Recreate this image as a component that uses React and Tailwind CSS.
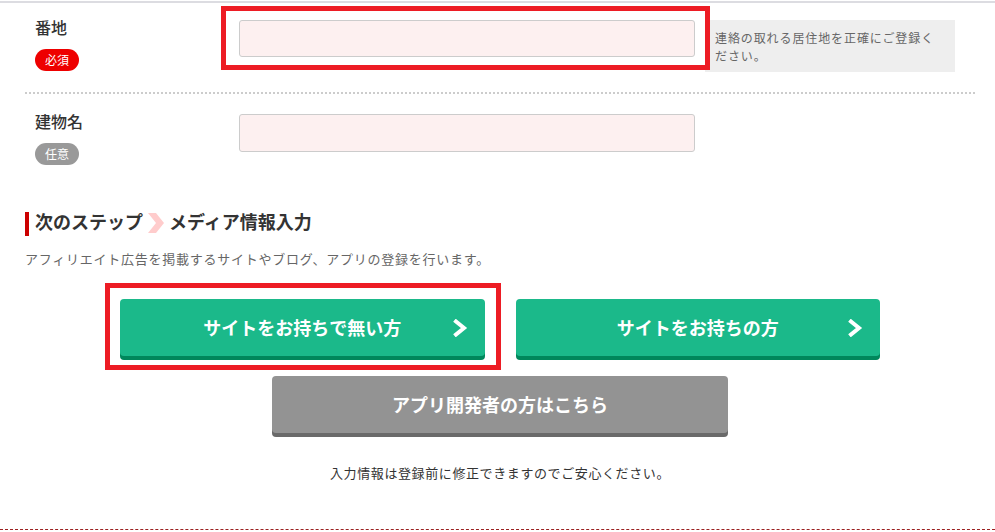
import React from 'react';

const Chevron = () => (
  <svg width="16" height="18" viewBox="0 0 16 18" className="absolute right-[17px] top-1/2 -translate-y-1/2">
    <polyline points="4,2.5 12,9 4,15.5" fill="none" stroke="#fff" strokeWidth="4" strokeLinecap="square" />
  </svg>
);

const Badge = ({ children, color }) => (
  <span className={`inline-flex items-center justify-center w-[44px] h-[22px] rounded-full text-white text-[12px] leading-none ${color}`}>
    {children}
  </span>
);

export default function App() {
  return (
    <div className="w-[995px] h-[532px] bg-white overflow-hidden font-['Noto_Sans_CJK_JP',sans-serif] text-[#333]">
      <div className="mt-px h-[2px] bg-[#dcdce1]" />

      <div className="pl-[25px]">
        <div className="w-[950px]">
          {/* 番地 */}
          <div className="flex pt-[17px] pb-[20px] pl-[10px] border-b-2 border-dotted border-[#cccccc]">
            <div className="w-[204px]">
              <div className="-mt-px text-[16px] leading-[16px] font-medium">番地</div>
              <div className="mt-[11px]">
                <Badge color="bg-[#ee0000]">必須</Badge>
              </div>
            </div>
            <div className="relative">
              <div className="w-[456px] h-[37px] rounded-[3px] border border-[#cccccc] bg-[#fdf0f0]" />
              <div className="absolute -left-[18px] -top-[14px] w-[489px] h-[64px] border-[5px] border-[#ed1c24] z-10" />
            </div>
            <div className="ml-[10px] w-[250px] h-[52px] bg-[#eeeeee] pl-[10px] pr-[18px] pt-[9px] text-[12px] leading-[18px] tracking-[0.9px] text-[#666]">
              連絡の取れる居住地を正確にご登録ください。
            </div>
          </div>

          {/* 建物名 */}
          <div className="flex pt-[20px] pl-[10px]">
            <div className="w-[204px]">
              <div className="-mt-px text-[16px] leading-[16px] font-medium">建物名</div>
              <div className="mt-[11px]">
                <Badge color="bg-[#999999]">任意</Badge>
              </div>
            </div>
            <div className="w-[456px] h-[38px] rounded-[3px] border border-[#cccccc] bg-[#fdf0f0]" />
          </div>

          {/* 次のステップ */}
          <div className="mt-[47px] flex items-start border-l-4 border-[#cc0000] pl-[6px] pb-[6px] h-[24px]">
            <span className="text-[18px] leading-[18px] font-bold">次のステップ</span>
            <svg width="16" height="20" viewBox="0 0 16 20" className="ml-[5px] mr-[5px] mt-[1px]">
              <polygon points="0,0 8,0 16,10 8,20 0,20 8,10" fill="#ffcccc" />
            </svg>
            <span className="text-[18px] leading-[18px] font-bold">メディア情報入力</span>
          </div>

          <p className="mt-[14px] text-[13px] leading-[18px] tracking-[0.75px] text-[#666]">
            アフィリエイト広告を掲載するサイトやブログ、アプリの登録を行います。
          </p>

          {/* buttons */}
          <div className="mt-[31px] w-[760px] mx-auto flex gap-[31px]">
            <div className="relative flex-1">
              <button className="relative w-full h-[57px] rounded-[4px] bg-[#1bb98a] shadow-[0_4px_0_#00875b] text-white text-[18px] font-bold">
                サイトをお持ちで無い方
                <Chevron />
              </button>
              <div className="absolute -left-[15px] -top-[16px] w-[396px] h-[87px] border-[5px] border-[#ed1c24]" />
            </div>
            <button className="relative flex-1 h-[57px] rounded-[4px] bg-[#1bb98a] shadow-[0_4px_0_#00875b] text-white text-[18px] font-bold">
              サイトをお持ちの方
              <Chevron />
            </button>
          </div>

          <div className="mt-[20px] flex justify-center">
            <button className="w-[456px] h-[57px] rounded-[4px] bg-[#939393] shadow-[0_4px_0_#6a6a6a] text-white text-[18px] font-bold">
              アプリ開発者の方はこちら
            </button>
          </div>

          <p className="mt-[30px] text-center text-[13px] leading-[20px] tracking-[0.6px] text-[#333]">
            入力情報は登録前に修正できますのでご安心ください。
          </p>
        </div>
      </div>

      <div className="mt-[46px] border-t border-dashed border-[#9b2020]" />
    </div>
  );
}
